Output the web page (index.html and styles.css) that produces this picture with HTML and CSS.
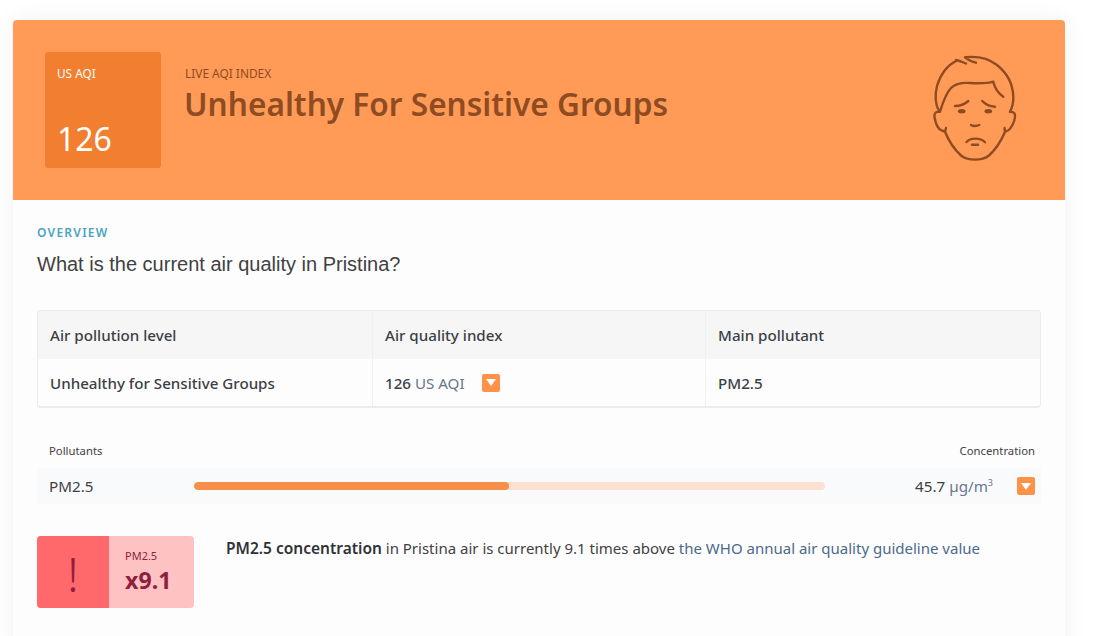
FILE: index.html
```html
<!DOCTYPE html>
<html lang="en">
<head>
    <meta charset="UTF-8">
    <title>Air quality in Pristina</title>
    <link rel="stylesheet" href="styles.css">
</head>
<body>
    <div class="card">
        <div class="banner">
            <div class="aqi-box">
                <span class="aqi-label">US AQI</span>
                <span class="aqi-value">126</span>
            </div>
            <div class="banner-text">
                <div class="banner-small">LIVE AQI INDEX</div>
                <div class="banner-title">Unhealthy For Sensitive Groups</div>
            </div>
            <svg class="face" width="90" height="112" viewBox="0 0 90 112" fill="none" stroke="#8f4c22" stroke-width="2.4" stroke-linecap="round" stroke-linejoin="round">
                <path d="M26 8 L31 9.500 L36 11.500"/>
                <path d="M26 9 C16 14 10 24 7 34 C5 42 5 52 9.300 59.700"/>
                <path d="M46 10.700 C42 9.500 38 8 35 5.300 C46 4 58 6 67 13 C77 21 83 32 83.300 45 C83.500 51 82 56 80 59.700"/>
                <path d="M10 59.700 C13 50 16 41 21 36 C26 31 32 30.500 40 31 C49 31.500 57 31.500 63.300 29.700 C64.500 35 68 41 73.300 44.700"/>
                <path d="M8.300 59.700 C5 60 4 62 4.500 65 C5.500 71 8 77 11.700 78.500 L15 79.700 L16 76"/>
                <path d="M80 59.700 C84 59.700 85.500 61.500 85 65 C84.500 70 81 77 78 78.500 L75 79.700 L74.500 76"/>
                <path d="M15 79.700 C18 87 24 97 31 103.500 C38 109 52 109 59 103.500 C66 97 72 87 75 79.700"/>
                <path d="M25 54 C30 54 35 52 38.300 49"/>
                <path d="M52.300 49 C55 52 60 54.500 65 54.700"/>
                <ellipse cx="31.700" cy="59.300" rx="3.800" ry="2.200" fill="#8f4c22" stroke="none"/>
                <ellipse cx="58.300" cy="59.300" rx="3.800" ry="2.200" fill="#8f4c22" stroke="none"/>
                <path d="M41 73 C43 74.300 47 74.300 49.300 73"/>
                <path d="M36.500 90 C40 86 50 85 55 90.300"/>
                <path d="M42 92.800 L48 92.800"/>
            </svg>
        </div>
        <div class="content">
            <div class="eyebrow">OVERVIEW</div>
            <h2 class="question">What is the current air quality in Pristina?</h2>

            <div class="table">
                <div class="cell head">Air pollution level</div>
                <div class="cell head">Air quality index</div>
                <div class="cell head">Main pollutant</div>
                <div class="cell">Unhealthy for Sensitive Groups</div>
                <div class="cell"><span>126 <span class="unit">US AQI</span></span><span class="toggle toggle-gap"></span></div>
                <div class="cell">PM2.5</div>
            </div>

            <div class="pollutants-head">
                <span>Pollutants</span>
                <span>Concentration</span>
            </div>
            <div class="pollutant">
                <span class="pollutant-name">PM2.5</span>
                <div class="bar"><div class="bar-fill" style="width: 49.900%"></div></div>
                <span class="pollutant-value">45.7 <span class="unit">µg/m<sup>3</sup></span></span>
                <span class="toggle"></span>
            </div>

            <div class="guideline">
                <div class="badge">
                    <div class="badge-icon">!</div>
                    <div class="badge-text">
                        <div class="badge-name">PM2.5</div>
                        <div class="badge-times">x9.1</div>
                    </div>
                </div>
                <p class="guideline-text"><b>PM2.5 concentration</b> in Pristina air is currently 9.1 times above <span class="link">the WHO annual air quality guideline value</span></p>
            </div>
        </div>
    </div>
</body>
</html>
```

FILE: styles.css
```css
html, body {
    height: 100%;
    overflow: hidden;
}
body {
    margin: 0;
    padding: 20px 0 0 13px;
    box-sizing: border-box;
    background-color: #fff;
    font-family: "Noto Sans", sans-serif;
    color: #414141;
}
.card {
    width: 1052px;
    height: 640px;
    background-color: #fdfdfd;
    border-radius: 4px 4px 0 0;
    box-shadow: 0 0 24px rgba(0, 0, 0, 0.06);
}
.banner {
    height: 180px;
    box-sizing: border-box;
    padding: 32px 50px 0 32px;
    display: flex;
    align-items: flex-start;
    background-color: #ff9b57;
    border-radius: 4px 4px 0 0;
}
.aqi-box {
    width: 116px;
    height: 116px;
    box-sizing: border-box;
    padding: 13px 12px 0;
    display: flex;
    flex-direction: column;
    justify-content: space-between;
    background-color: #f27e2f;
    border-radius: 3px;
    color: #fff;
}
.aqi-label {
    font-size: 11.800px;
    line-height: 17px;
}
.aqi-value {
    font-size: 32px;
    line-height: 45px;
    margin: 0 0 7px 0;
}
.banner-text {
    margin-left: 24px;
    padding-top: 13px;
    flex: 1;
    color: #8f4c22;
}
.banner-small {
    font-size: 11.900px;
    line-height: 17px;
}
.banner-title {
    margin: 1px 0 0 -1px;
    font-size: 31.600px;
    line-height: 42px;
    font-weight: 600;
}
.face {
    margin: 0 -5px 0 0;
}
.content {
    padding: 24px 24px 0;
}
.eyebrow {
    font-size: 12px;
    line-height: 17px;
    font-weight: 600;
    letter-spacing: 1.250px;
    color: #4aa3c4;
}
.question {
    margin: 9px 0 0;
    font-family: "Liberation Sans", sans-serif;
    font-size: 20px;
    line-height: 28px;
    font-weight: 400;
}
.table {
    margin-top: 32px;
    display: grid;
    grid-template-columns: 334px 333px 1fr;
    grid-template-rows: 48px 47px;
    border: 1px solid #eaecef;
    border-bottom-width: 2px;
    border-radius: 4px;
    overflow: hidden;
}
.cell {
    box-sizing: border-box;
    padding: 0 12px;
    display: flex;
    align-items: center;
    font-size: 15.150px;
    font-weight: 500;
    color: #3b3f46;
    border-left: 1px solid #edf0f5;
}
.cell:nth-child(3n+1) {
    border-left: none;
}
.head {
    background-color: #f6f6f6;
}
.unit {
    font-weight: 400;
    color: #68778c;
}
.toggle {
    width: 18px;
    height: 18px;
    display: inline-flex;
    align-items: center;
    justify-content: center;
    flex: none;
    background-color: #ff9148;
    border-radius: 2px;
}
.toggle::after {
    content: "";
    border-top: 7px solid #fff;
    border-left: 5px solid transparent;
    border-right: 5px solid transparent;
}
.toggle-gap {
    margin-left: 17px;
}
.pollutants-head {
    margin-top: 35px;
    padding: 0 6px 0 12px;
    display: flex;
    justify-content: space-between;
    font-size: 11.300px;
    line-height: 16px;
}
.pollutant {
    margin-top: 9px;
    height: 36px;
    padding: 0 6px 0 12px;
    display: flex;
    align-items: center;
    background-color: #f9fafc;
    font-size: 15.200px;
}
.pollutant-name {
    width: 145px;
}
.bar {
    width: 631px;
    height: 8px;
    background-color: #fde0d0;
    border-radius: 4px;
    overflow: hidden;
}
.bar-fill {
    height: 100%;
    background-color: #f78f4a;
    border-radius: 4px;
}
.pollutant-value {
    margin-left: auto;
    margin-right: 24px;
}
.pollutant-value sup {
    font-size: 9px;
    line-height: 0;
}
.guideline {
    margin-top: 32px;
    display: flex;
    align-items: flex-start;
}
.badge {
    width: 157px;
    height: 72px;
    display: flex;
    flex: none;
    border-radius: 4px;
    overflow: hidden;
    background-color: #ffc2c2;
    color: #8f1f3d;
}
.badge-icon {
    width: 72px;
    background-color: #ff696b;
    font-size: 48px;
    font-weight: 300;
    line-height: 76px;
    text-align: center;
}
.badge-text {
    padding: 11px 0 0 16px;
}
.badge-name {
    font-size: 11px;
    line-height: 18px;
}
.badge-times {
    font-size: 23.200px;
    line-height: 31px;
    font-weight: 700;
}
.guideline-text {
    margin: 2px 0 0 32px;
    font-size: 15px;
    line-height: 20px;
}
.guideline-text b {
    font-size: 15.500px;
    font-weight: 600;
    color: #2f3237;
}
.link {
    color: #4a6a8c;
}
```
